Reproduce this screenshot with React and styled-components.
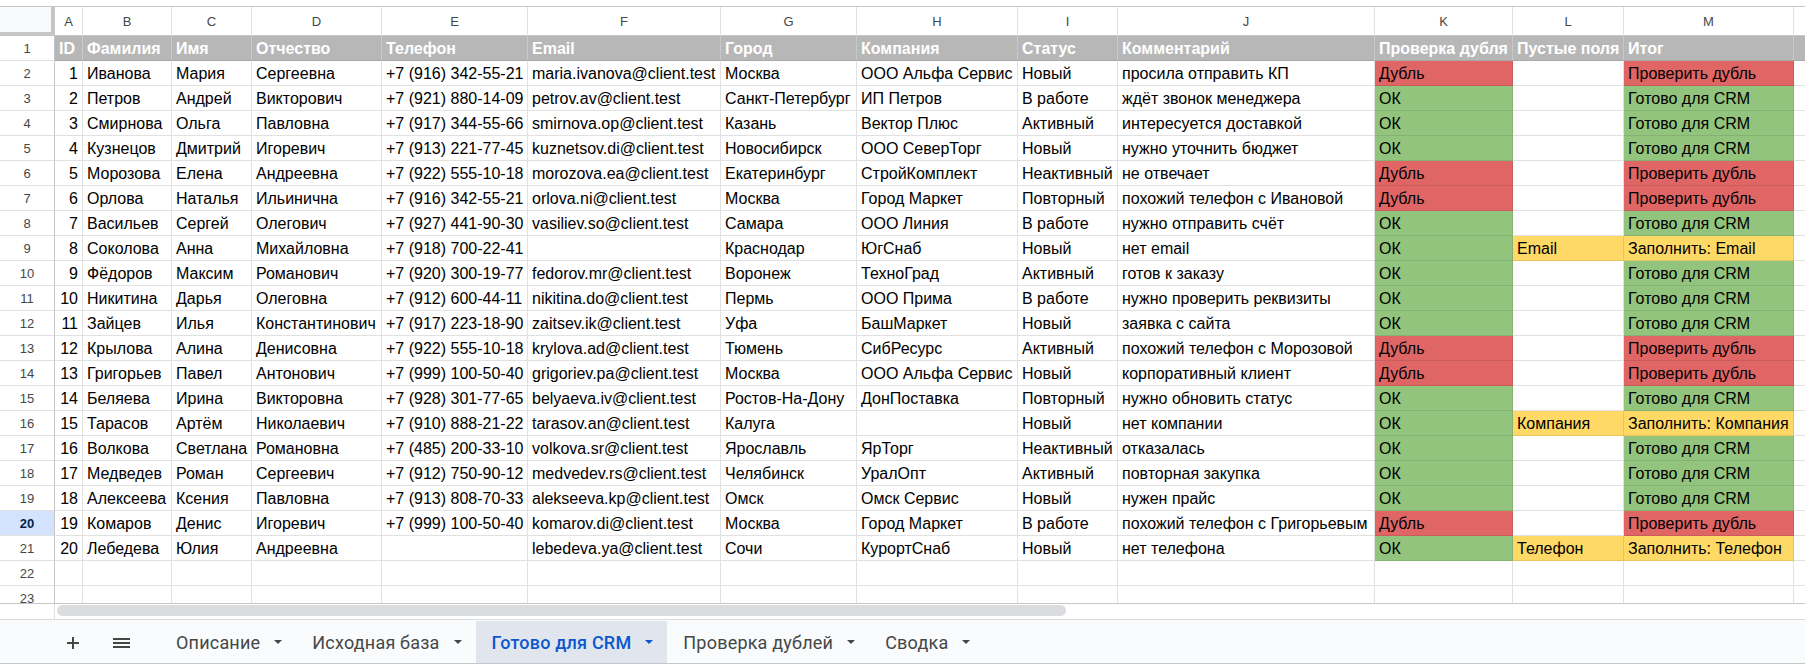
import React from 'react';
import styled, { createGlobalStyle } from 'styled-components';

const WIDTHS = [55, 28, 89, 80, 130, 146, 193, 136, 161, 100, 257, 138, 111, 170];
const TEMPLATE = WIDTHS.map((w) => `${w}px`).join(' ') + ' 1fr';
const LETTERS = ['A', 'B', 'C', 'D', 'E', 'F', 'G', 'H', 'I', 'J', 'K', 'L', 'M', ''];
const HEADERS = ['ID', 'Фамилия', 'Имя', 'Отчество', 'Телефон', 'Email', 'Город', 'Компания', 'Статус', 'Комментарий', 'Проверка дубля', 'Пустые поля', 'Итог', ''];

const FILL = {
  red: '#e06666',
  green: '#93c47d',
  yellow: '#ffd966',
};

const DATA = [
  [1, 'Иванова', 'Мария', 'Сергеевна', '+7 (916) 342-55-21', 'maria.ivanova@client.test', 'Москва', 'ООО Альфа Сервис', 'Новый', 'просила отправить КП', 'Дубль', '', 'Проверить дубль'],
  [2, 'Петров', 'Андрей', 'Викторович', '+7 (921) 880-14-09', 'petrov.av@client.test', 'Санкт-Петербург', 'ИП Петров', 'В работе', 'ждёт звонок менеджера', 'ОК', '', 'Готово для CRM'],
  [3, 'Смирнова', 'Ольга', 'Павловна', '+7 (917) 344-55-66', 'smirnova.op@client.test', 'Казань', 'Вектор Плюс', 'Активный', 'интересуется доставкой', 'ОК', '', 'Готово для CRM'],
  [4, 'Кузнецов', 'Дмитрий', 'Игоревич', '+7 (913) 221-77-45', 'kuznetsov.di@client.test', 'Новосибирск', 'ООО СеверТорг', 'Новый', 'нужно уточнить бюджет', 'ОК', '', 'Готово для CRM'],
  [5, 'Морозова', 'Елена', 'Андреевна', '+7 (922) 555-10-18', 'morozova.ea@client.test', 'Екатеринбург', 'СтройКомплект', 'Неактивный', 'не отвечает', 'Дубль', '', 'Проверить дубль'],
  [6, 'Орлова', 'Наталья', 'Ильинична', '+7 (916) 342-55-21', 'orlova.ni@client.test', 'Москва', 'Город Маркет', 'Повторный', 'похожий телефон с Ивановой', 'Дубль', '', 'Проверить дубль'],
  [7, 'Васильев', 'Сергей', 'Олегович', '+7 (927) 441-90-30', 'vasiliev.so@client.test', 'Самара', 'ООО Линия', 'В работе', 'нужно отправить счёт', 'ОК', '', 'Готово для CRM'],
  [8, 'Соколова', 'Анна', 'Михайловна', '+7 (918) 700-22-41', '', 'Краснодар', 'ЮгСнаб', 'Новый', 'нет email', 'ОК', 'Email', 'Заполнить: Email'],
  [9, 'Фёдоров', 'Максим', 'Романович', '+7 (920) 300-19-77', 'fedorov.mr@client.test', 'Воронеж', 'ТехноГрад', 'Активный', 'готов к заказу', 'ОК', '', 'Готово для CRM'],
  [10, 'Никитина', 'Дарья', 'Олеговна', '+7 (912) 600-44-11', 'nikitina.do@client.test', 'Пермь', 'ООО Прима', 'В работе', 'нужно проверить реквизиты', 'ОК', '', 'Готово для CRM'],
  [11, 'Зайцев', 'Илья', 'Константинович', '+7 (917) 223-18-90', 'zaitsev.ik@client.test', 'Уфа', 'БашМаркет', 'Новый', 'заявка с сайта', 'ОК', '', 'Готово для CRM'],
  [12, 'Крылова', 'Алина', 'Денисовна', '+7 (922) 555-10-18', 'krylova.ad@client.test', 'Тюмень', 'СибРесурс', 'Активный', 'похожий телефон с Морозовой', 'Дубль', '', 'Проверить дубль'],
  [13, 'Григорьев', 'Павел', 'Антонович', '+7 (999) 100-50-40', 'grigoriev.pa@client.test', 'Москва', 'ООО Альфа Сервис', 'Новый', 'корпоративный клиент', 'Дубль', '', 'Проверить дубль'],
  [14, 'Беляева', 'Ирина', 'Викторовна', '+7 (928) 301-77-65', 'belyaeva.iv@client.test', 'Ростов-На-Дону', 'ДонПоставка', 'Повторный', 'нужно обновить статус', 'ОК', '', 'Готово для CRM'],
  [15, 'Тарасов', 'Артём', 'Николаевич', '+7 (910) 888-21-22', 'tarasov.an@client.test', 'Калуга', '', 'Новый', 'нет компании', 'ОК', 'Компания', 'Заполнить: Компания'],
  [16, 'Волкова', 'Светлана', 'Романовна', '+7 (485) 200-33-10', 'volkova.sr@client.test', 'Ярославль', 'ЯрТорг', 'Неактивный', 'отказалась', 'ОК', '', 'Готово для CRM'],
  [17, 'Медведев', 'Роман', 'Сергеевич', '+7 (912) 750-90-12', 'medvedev.rs@client.test', 'Челябинск', 'УралОпт', 'Активный', 'повторная закупка', 'ОК', '', 'Готово для CRM'],
  [18, 'Алексеева', 'Ксения', 'Павловна', '+7 (913) 808-70-33', 'alekseeva.kp@client.test', 'Омск', 'Омск Сервис', 'Новый', 'нужен прайс', 'ОК', '', 'Готово для CRM'],
  [19, 'Комаров', 'Денис', 'Игоревич', '+7 (999) 100-50-40', 'komarov.di@client.test', 'Москва', 'Город Маркет', 'В работе', 'похожий телефон с Григорьевым', 'Дубль', '', 'Проверить дубль'],
  [20, 'Лебедева', 'Юлия', 'Андреевна', '', 'lebedeva.ya@client.test', 'Сочи', 'КурортСнаб', 'Новый', 'нет телефона', 'ОК', 'Телефон', 'Заполнить: Телефон'],
];

const TABS = [
  { name: 'Описание' },
  { name: 'Исходная база' },
  { name: 'Готово для CRM', active: true },
  { name: 'Проверка дублей' },
  { name: 'Сводка' },
];

const SELECTED_ROW = 20;

const GlobalStyle = createGlobalStyle`
  html, body {
    margin: 0;
    padding: 0;
    background: #ffffff;
  }
  body {
    font-family: "Liberation Sans", Arial, sans-serif;
    overflow: hidden;
  }
`;

const Page = styled.div`
  display: flex;
  flex-direction: column;
  width: 1805px;
  height: 664px;
  overflow: hidden;
  background: #ffffff;
`;

const TopGap = styled.div`
  flex: none;
  height: 6px;
`;

const GridViewport = styled.div`
  flex: none;
  height: 598px;
  box-sizing: border-box;
  border-top: 1px solid #c7c7c7;
  border-bottom: 1px solid #c7c7c7;
  overflow: hidden;
`;

const Row = styled.div`
  display: grid;
  grid-template-columns: ${TEMPLATE};
  height: ${(p) => p.$height}px;
`;

const Corner = styled.div`
  box-sizing: border-box;
  background: #f8f9fa;
  border-right: 4px solid #c4c7c5;
  border-bottom: 4px solid #c4c7c5;
`;

const ColumnLetter = styled.div`
  box-sizing: border-box;
  display: flex;
  align-items: center;
  justify-content: center;
  border-right: ${(p) => (p.$last ? 'none' : '1px solid #e1e1e1')};
  border-bottom: 1px solid #c4c7c5;
  font-family: "Liberation Sans", Arial, sans-serif;
  font-size: 13px;
  color: #444746;
  background: #ffffff;
`;

const RowNumber = styled.div`
  box-sizing: border-box;
  display: flex;
  align-items: center;
  justify-content: center;
  border-right: 1px solid #c4c7c5;
  border-bottom: 1px solid #e1e1e1;
  font-size: 13px;
  color: ${(p) => (p.$selected ? '#041e49' : '#444746')};
  font-weight: ${(p) => (p.$selected ? 700 : 400)};
  background: ${(p) => (p.$selected ? '#d3e3fd' : '#ffffff')};
`;

const Cell = styled.div`
  box-sizing: border-box;
  display: flex;
  align-items: flex-start;
  justify-content: ${(p) => (p.$align === 'right' ? 'flex-end' : 'flex-start')};
  padding: 1px 4px 0 4px;
  line-height: 23px;
  font-size: 16px;
  white-space: nowrap;
  overflow: hidden;
  color: #000000;
  background: ${(p) => p.$fill || '#ffffff'};
  border-right: ${(p) => (p.$last ? 'none' : `1px solid ${p.$fill ? 'rgba(0,0,0,0.09)' : '#e1e1e1'}`)};
  border-bottom: 1px solid ${(p) => (p.$fill ? 'rgba(0,0,0,0.09)' : '#e1e1e1')};
`;

const HeadCell = styled.div`
  box-sizing: border-box;
  display: flex;
  align-items: flex-start;
  padding: 1px 4px 0 4px;
  line-height: 23px;
  font-size: 16px;
  font-weight: 700;
  white-space: nowrap;
  overflow: hidden;
  color: #ffffff;
  background: #b7b7b7;
  border-right: ${(p) => (p.$last ? 'none' : '1px solid #c9c9c9')};
  border-bottom: 1px solid #a9a9a9;
`;

const ScrollTrack = styled.div`
  flex: none;
  height: 15px;
  display: flex;
  align-items: flex-start;
  background: #ffffff;
`;

const ScrollGutter = styled.div`
  box-sizing: border-box;
  width: 55px;
  height: 100%;
  border-right: 1px solid #e1e1e1;
`;

const ScrollThumb = styled.div`
  margin: 1px 0 0 2px;
  width: 1009px;
  height: 11px;
  border-radius: 6px;
  background: #dadce0;
`;

const TabBar = styled.div`
  flex: none;
  box-sizing: border-box;
  height: 45px;
  display: flex;
  align-items: stretch;
  padding: 1px 0 0 57px;
  background: #f9fbfd;
  border-top: 1px solid #dadce0;
  border-bottom: 1px solid #c4c7c5;
  font-family: Roboto, "Noto Sans", sans-serif;
`;

const IconButton = styled.div`
  flex: none;
  width: 32px;
  margin-left: ${(p) => p.$gap || 0}px;
  display: flex;
  align-items: center;
  justify-content: center;
  color: #444746;
  padding-top: 1px;
`;

const Tabs = styled.div`
  display: flex;
  align-items: stretch;
  margin-left: 23px;
`;

const Tab = styled.div`
  display: flex;
  align-items: center;
  gap: 14px;
  padding: 0 14px 0 16px;
  font-size: 18px;
  letter-spacing: 0.2px;
  white-space: nowrap;
  background: ${(p) => (p.$active ? '#e1e6ee' : 'transparent')};
  color: ${(p) => (p.$active ? '#0b57d0' : '#444746')};
  font-weight: ${(p) => (p.$active ? 500 : 400)};
`;

const Caret = styled.span`
  width: 0;
  height: 0;
  border-left: 4px solid transparent;
  border-right: 4px solid transparent;
  border-top: 4px solid currentColor;
`;

function PlusIcon() {
  return (
    <svg width="12" height="12" viewBox="0 0 12 12">
      <path d="M6 0v12M0 6h12" stroke="currentColor" strokeWidth="2" fill="none" />
    </svg>
  );
}

function MenuIcon() {
  return (
    <svg width="17" height="10" viewBox="0 0 17 10">
      <path d="M0 1h17M0 5h17M0 9h17" stroke="currentColor" strokeWidth="1.8" fill="none" />
    </svg>
  );
}

function fillFor(colIndex, value) {
  if (colIndex === 10) return value === 'Дубль' ? FILL.red : FILL.green;
  if (colIndex === 11) return value ? FILL.yellow : null;
  if (colIndex === 12) {
    if (value.startsWith('Проверить')) return FILL.red;
    if (value.startsWith('Заполнить')) return FILL.yellow;
    return FILL.green;
  }
  return null;
}

export default function App() {
  return (
    <Page>
      <GlobalStyle />
      <TopGap />
      <GridViewport>
        <Row $height={29}>
          <Corner />
          {LETTERS.map((l, i) => (
            <ColumnLetter key={i} $last={i === LETTERS.length - 1}>
              {l}
            </ColumnLetter>
          ))}
        </Row>
        <Row $height={25}>
          <RowNumber>1</RowNumber>
          {HEADERS.map((h, i) => (
            <HeadCell key={i} $last={i === HEADERS.length - 1}>
              {h}
            </HeadCell>
          ))}
        </Row>
        {DATA.map((row, r) => {
          const rowNum = r + 2;
          return (
            <Row key={rowNum} $height={25}>
              <RowNumber $selected={rowNum === SELECTED_ROW}>{rowNum}</RowNumber>
              {row.map((v, c) => (
                <Cell key={c} $align={c === 0 ? 'right' : 'left'} $fill={fillFor(c, String(v))}>
                  {v}
                </Cell>
              ))}
              <Cell $last />
            </Row>
          );
        })}
        {[22, 23].map((rowNum) => (
          <Row key={rowNum} $height={25}>
            <RowNumber>{rowNum}</RowNumber>
            {LETTERS.map((_, i) => (
              <Cell key={i} $last={i === LETTERS.length - 1} />
            ))}
          </Row>
        ))}
      </GridViewport>
      <ScrollTrack>
        <ScrollGutter />
        <ScrollThumb />
      </ScrollTrack>
      <TabBar>
        <IconButton>
          <PlusIcon />
        </IconButton>
        <IconButton $gap={16}>
          <MenuIcon />
        </IconButton>
        <Tabs>
          {TABS.map((t) => (
            <Tab key={t.name} $active={t.active}>
              {t.name}
              <Caret />
            </Tab>
          ))}
        </Tabs>
      </TabBar>
    </Page>
  );
}
